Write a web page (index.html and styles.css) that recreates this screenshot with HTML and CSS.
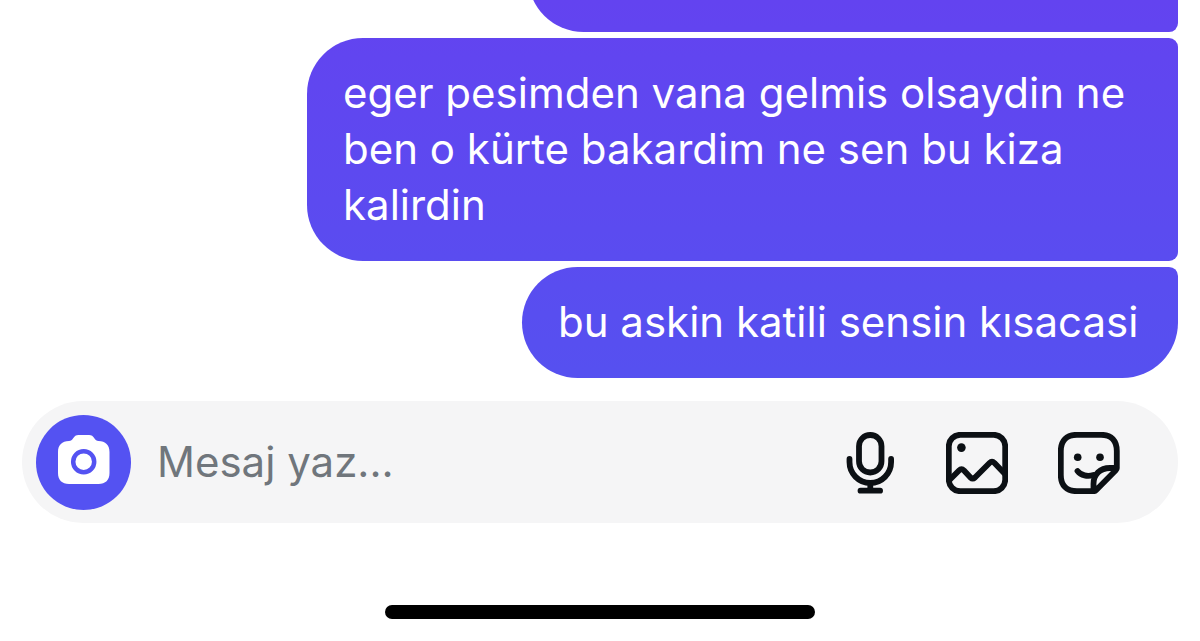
FILE: index.html
```
<!DOCTYPE html>
<html lang="tr">
<head>
<meta charset="utf-8">
<meta name="viewport" content="width=device-width, initial-scale=1">
<title>Mesajlar</title>
<link rel="stylesheet" href="styles.css">
</head>
<body>
<main class="thread">
  <div class="bubble bubble-cut"></div>
  <p class="bubble">eger pesimden vana gelmis olsaydin ne ben o kürte bakardim ne sen bu kiza kalirdin</p>
  <p class="bubble bubble-last">bu askin katili sensin kısacasi</p>
</main>
<form class="composer">
  <button class="camera" type="button" aria-label="Kamera">
    <svg width="52" height="50" viewBox="0 0 52 50">
      <path fill="#fff" d="M11 6C13 6 14 5 15 3.500C16.500 1 18 0 20.500 0H31C33.500 0 35 1 36.500 3.500C37.500 5 38.500 6 40.500 6C47.500 6 51.500 10 51.500 17V38C51.500 45 47.500 49 40.500 49H11C4 49 0 45 0 38V17C0 10 4 6 11 6Z"/>
      <circle cx="25.700" cy="26.700" r="10.500" fill="none" stroke="#5452f2" stroke-width="4.500"/>
    </svg>
  </button>
  <input class="field" type="text" placeholder="Mesaj yaz..." aria-label="Mesaj yaz">
  <div class="tools">
    <button class="tool" type="button" aria-label="Ses kaydı">
      <svg width="50" height="62" viewBox="0 0 50 62">
        <rect x="13" y="3" width="22.500" height="37.500" rx="11.200"/>
        <path d="M3.500 27v3a20.800 21 0 0 0 41.600 0v-3M24.300 51v7M14.500 58.700h19.600"/>
      </svg>
    </button>
    <button class="tool" type="button" aria-label="Fotoğraf">
      <svg width="62" height="62" viewBox="0 0 62 62">
        <rect x="2.800" y="2.800" width="56.400" height="56.400" rx="11.500"/>
        <path d="M3.500 48L13 38.500Q15.500 36 18 38.500L24.500 45.500Q26.700 47.500 29 45.500L43.500 31Q46 28.500 48.500 31L59 42"/>
        <circle class="dot" cx="15.400" cy="15.600" r="4.300"/>
      </svg>
    </button>
    <button class="tool" type="button" aria-label="Çıkartma">
      <svg width="62" height="62" viewBox="0 0 62 62">
        <path d="M58.800 36V19C58.800 8.500 53.500 2.800 43 2.800H19C8.500 2.800 2.800 8.500 2.800 19V43C2.800 53.500 8.500 59.200 19 59.200H35.500Q37 59.200 38 58.200L57.800 38.200Q58.800 37.200 58.800 36H52C42 36 35.500 42.500 35.500 52V59"/>
        <path d="M19.500 39C23 43.500 29.500 45 35.500 43"/>
        <circle class="dot" cx="19.700" cy="25.200" r="3.800"/>
        <circle class="dot" cx="42" cy="25.200" r="3.800"/>
      </svg>
    </button>
  </div>
</form>
<div class="home-bar"></div>
</body>
</html>
```
FILE: styles.css
```
* {
  box-sizing: border-box;
}

body {
  display: flex;
  flex-direction: column;
  height: 100vh;
  margin: 0;
  padding: 0 22px 22px;
  background: #fff;
  font-family: Inter, "Liberation Sans", sans-serif;
  font-size: 42px;
  line-height: 56px;
}

.thread {
  display: flex;
  flex: 1;
  flex-direction: column;
  align-items: flex-end;
  justify-content: flex-end;
  gap: 6px;
  min-height: 0;
  overflow: hidden;
}

.bubble {
  flex: none;
  max-width: 871px;
  margin: 0;
  padding: 27px 36px 28px;
  border-radius: 56px 9px 9px 56px;
  background: linear-gradient(#6343f0 0, #5551f0 400px) fixed;
  color: #fff;
}

.bubble-cut {
  width: 650px;
  height: 111px;
}

.bubble-last {
  min-width: 656px;
  border-bottom-right-radius: 56px;
}

.composer {
  display: flex;
  align-items: center;
  gap: 26px;
  margin: 23px 0 82px;
  padding: 14px 58px 13px 14px;
  border-radius: 61px;
  background: #f5f5f6;
}

.camera,
.tool {
  display: flex;
  align-items: center;
  justify-content: center;
  padding: 0;
  border: 0;
  background: none;
}

.camera {
  flex: none;
  width: 95px;
  height: 95px;
  padding-bottom: 5px;
  border-radius: 50%;
  background: #5452f2;
}

.field {
  flex: 1;
  min-width: 0;
  padding: 0 0 2px;
  border: 0;
  outline: 0;
  background: none;
  font: inherit;
  color: #0c1014;
}

.field::placeholder {
  color: #70767c;
  opacity: 1;
}

.tools {
  display: flex;
  gap: 50px;
}

.tool svg {
  fill: none;
  stroke: #0c1014;
  stroke-width: 5.8;
  stroke-linecap: round;
  stroke-linejoin: round;
}

.tool .dot {
  fill: #0c1014;
  stroke: none;
}

.home-bar {
  align-self: center;
  width: 430px;
  max-width: 100%;
  height: 14px;
  border-radius: 7px;
  background: #000;
}
```
